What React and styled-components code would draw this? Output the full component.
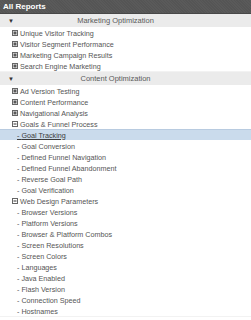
import React from "react"
import styled, { createGlobalStyle } from "styled-components"

const GlobalStyle = createGlobalStyle`
    html, body {
        margin: 0;
        padding: 0;
        background: #ffffff;
    }
    body {
        font-family: "Liberation Sans", Arial, Helvetica, sans-serif;
    }
`

let Panel = styled.div`
    width: 251px;
    height: 320px;
    overflow: hidden;
    background: #ffffff;
`
let TitleBar = styled.div`
    height: 13px;
    display: flex;
    align-items: center;
    padding-left: 3px;
    background-color: #5a5a5a;
    background-image: repeating-linear-gradient(45deg, rgba(0,0,0,.06) 0 1px, transparent 1px 2px);
    border-bottom: 1px solid #484848;
    color: #ffffff;
    font-size: 8px;
    font-weight: bold;
`
let SectionHeader = styled.div`
    height: 13px;
    display: flex;
    align-items: center;
    background: #ebebeb;
    border-bottom: 1px solid #dcdcdc;
    color: #5a5a5a;
    font-size: 7.5px;
`
let Arrow = styled.span`
    width: 20px;
    padding-left: 8px;
    font-size: 6px;
    color: #333333;
    box-sizing: border-box;
`
let SectionTitle = styled.span`
    flex: 1;
    text-align: center;
    padding-right: 40px;
`
let Row = styled.div`
    height: 10px;
    display: flex;
    align-items: center;
    padding-left: ${(props) => (props.sub ? 17 : 12)}px;
    border-bottom: 1px solid ${(props) => (props.selected ? "#b8cbe0" : "#f2f2f2")};
    border-top: 1px solid ${(props) => (props.selected ? "#b8cbe0" : "transparent")};
    margin-top: -1px;
    background: ${(props) => (props.selected ? "#cadbec" : "#ffffff")};
    color: ${(props) => (props.selected ? "#3c3c3c" : "#555555")};
    font-size: 7.2px;
    white-space: nowrap;
`
let Label = styled.span`
    text-decoration: ${(props) => (props.selected ? "underline" : "none")};
`
let ToggleBox = styled.svg`
    width: 6px;
    height: 6px;
    margin-right: 2px;
    flex: none;
`

let Toggle = ({ open }) => (
    <ToggleBox viewBox="0 0 6 6">
        <rect x="0.5" y="0.5" width="5" height="5" fill={open ? "#ffffff" : "#cfcfcf"} stroke="#666666" />
        <rect x="1.5" y="2.5" width="3" height="1" fill="#333333" />
        {!open && <rect x="2.5" y="1.5" width="1" height="3" fill="#333333" />}
    </ToggleBox>
)

let sections = [
    {
        title: "Marketing Optimization",
        items: [
            { label: "Unique Visitor Tracking" },
            { label: "Visitor Segment Performance" },
            { label: "Marketing Campaign Results" },
            { label: "Search Engine Marketing" },
        ],
    },
    {
        title: "Content Optimization",
        items: [
            { label: "Ad Version Testing" },
            { label: "Content Performance" },
            { label: "Navigational Analysis" },
            {
                label: "Goals & Funnel Process",
                open: true,
                children: [
                    "Goal Tracking",
                    "Goal Conversion",
                    "Defined Funnel Navigation",
                    "Defined Funnel Abandonment",
                    "Reverse Goal Path",
                    "Goal Verification",
                ],
            },
            {
                label: "Web Design Parameters",
                open: true,
                children: [
                    "Browser Versions",
                    "Platform Versions",
                    "Browser & Platform Combos",
                    "Screen Resolutions",
                    "Screen Colors",
                    "Languages",
                    "Java Enabled",
                    "Flash Version",
                    "Connection Speed",
                    "Hostnames",
                ],
            },
        ],
    },
]

let selected = "Goal Tracking"

export default function App() {
    return (
        <Panel>
            <GlobalStyle />
            <TitleBar>All Reports</TitleBar>
            {sections.map((section) => (
                <React.Fragment key={section.title}>
                    <SectionHeader>
                        <Arrow>▼</Arrow>
                        <SectionTitle>{section.title}</SectionTitle>
                    </SectionHeader>
                    {section.items.map((item) => (
                        <React.Fragment key={item.label}>
                            <Row>
                                <Toggle open={item.open} />
                                {item.label}
                            </Row>
                            {(item.children || []).map((child) => (
                                <Row sub key={child} selected={child === selected}>
                                    <Label selected={child === selected}>- {child}</Label>
                                </Row>
                            ))}
                        </React.Fragment>
                    ))}
                </React.Fragment>
            ))}
        </Panel>
    )
}
